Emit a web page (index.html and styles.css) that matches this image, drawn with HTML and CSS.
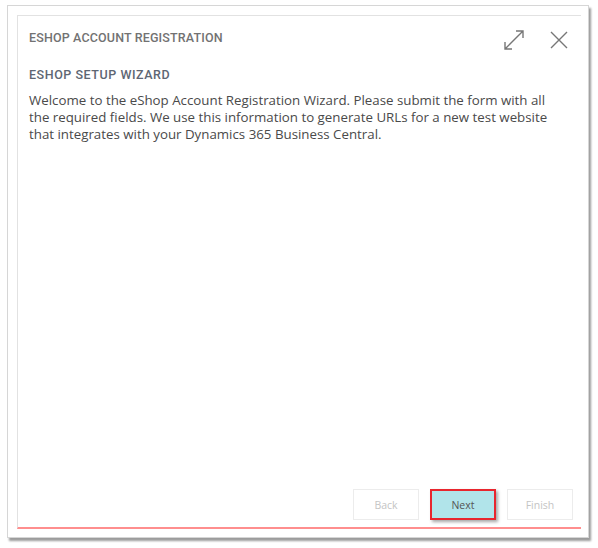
FILE: index.html
```html
<!DOCTYPE html>
<html>
<head>
<meta charset="utf-8">
<link rel="stylesheet" href="styles.css">
</head>
<body>
<div class="frame">
  <div class="panel">
    <div class="header">
      <div class="title">ESHOP ACCOUNT REGISTRATION</div>
      <div class="actions">
        <svg class="icon expand" width="22" height="22" viewBox="0 0 22 22">
          <path d="M2 20 L20 2 M13 2 H20 V9 M2 13 V20 H9" fill="none" stroke="#777" stroke-width="1.4"/>
        </svg>
        <svg class="icon close" width="20" height="20" viewBox="0 0 20 20">
          <path d="M2 2 L18 18 M18 2 L2 18" fill="none" stroke="#777" stroke-width="1.4"/>
        </svg>
      </div>
    </div>
    <div class="content">
      <div class="subtitle">ESHOP SETUP WIZARD</div>
      <p class="intro">Welcome to the eShop Account Registration Wizard. Please submit the form with all the required fields. We use this information to generate URLs for a new test website that integrates with your Dynamics 365 Business Central.</p>
    </div>
    <div class="footer">
      <button class="btn disabled">Back</button>
      <button class="btn primary">Next</button>
      <button class="btn disabled">Finish</button>
    </div>
  </div>
</div>
</body>
</html>
```

FILE: styles.css
```css
html, body {
  margin: 0;
  padding: 0;
  background: #ffffff;
}
body {
  width: 598px;
  height: 548px;
  overflow: hidden;
  font-family: "Open Sans", "Segoe UI", sans-serif;
}
.frame {
  margin: 5px 0 0 7px;
  width: 582px;
  height: 533px;
  box-sizing: border-box;
  border: 1px solid #d6d6d6;
  box-shadow: 2px 3px 2px #9c9c9c;
  padding: 9px 7px 8px 9px;
  background: #fff;
}
.panel {
  height: 100%;
  box-sizing: border-box;
  border-top: 1px solid #e2e2e2;
  border-left: 1px solid #e2e2e2;
  border-bottom: 2px solid #ff8e8e;
  display: flex;
  flex-direction: column;
}
.header {
  display: flex;
  align-items: center;
  justify-content: space-between;
  padding: 12px 12px 0 11px;
  height: 24px;
}
.title {
  font-family: "Roboto", sans-serif;
  font-size: 12.5px;
  font-weight: 500;
  color: #727272;
  letter-spacing: 0.15px;
  margin-top: -5px;
}
.actions {
  display: flex;
  align-items: center;
  gap: 24px;
}
.icon { display: block; }
.content {
  flex: 1;
  padding: 0 25px 0 11px;
}
.subtitle {
  margin-top: 15px;
  font-family: "Roboto", sans-serif;
  font-size: 12.5px;
  font-weight: 500;
  color: #5e6673;
  letter-spacing: 0.55px;
}
.intro {
  margin: 10px 0 0;
  font-size: 13.3px;
  line-height: 17px;
  color: #4a4a4a;
}
.footer {
  display: flex;
  justify-content: flex-end;
  gap: 11px;
  padding: 0 8px 7px 0;
}
.btn {
  width: 66px;
  height: 31px;
  box-sizing: border-box;
  font-family: "Open Sans", sans-serif;
  font-size: 10.5px;
  background: #fff;
  border: 1px solid #ececec;
  color: #c4c4c4;
  padding: 0;
}
.btn.primary {
  background: #b1e4ea;
  border: 2px solid #e8262e;
  color: #555;
  box-shadow: 2px 2px 3px rgba(0,0,0,0.35);
}
```
